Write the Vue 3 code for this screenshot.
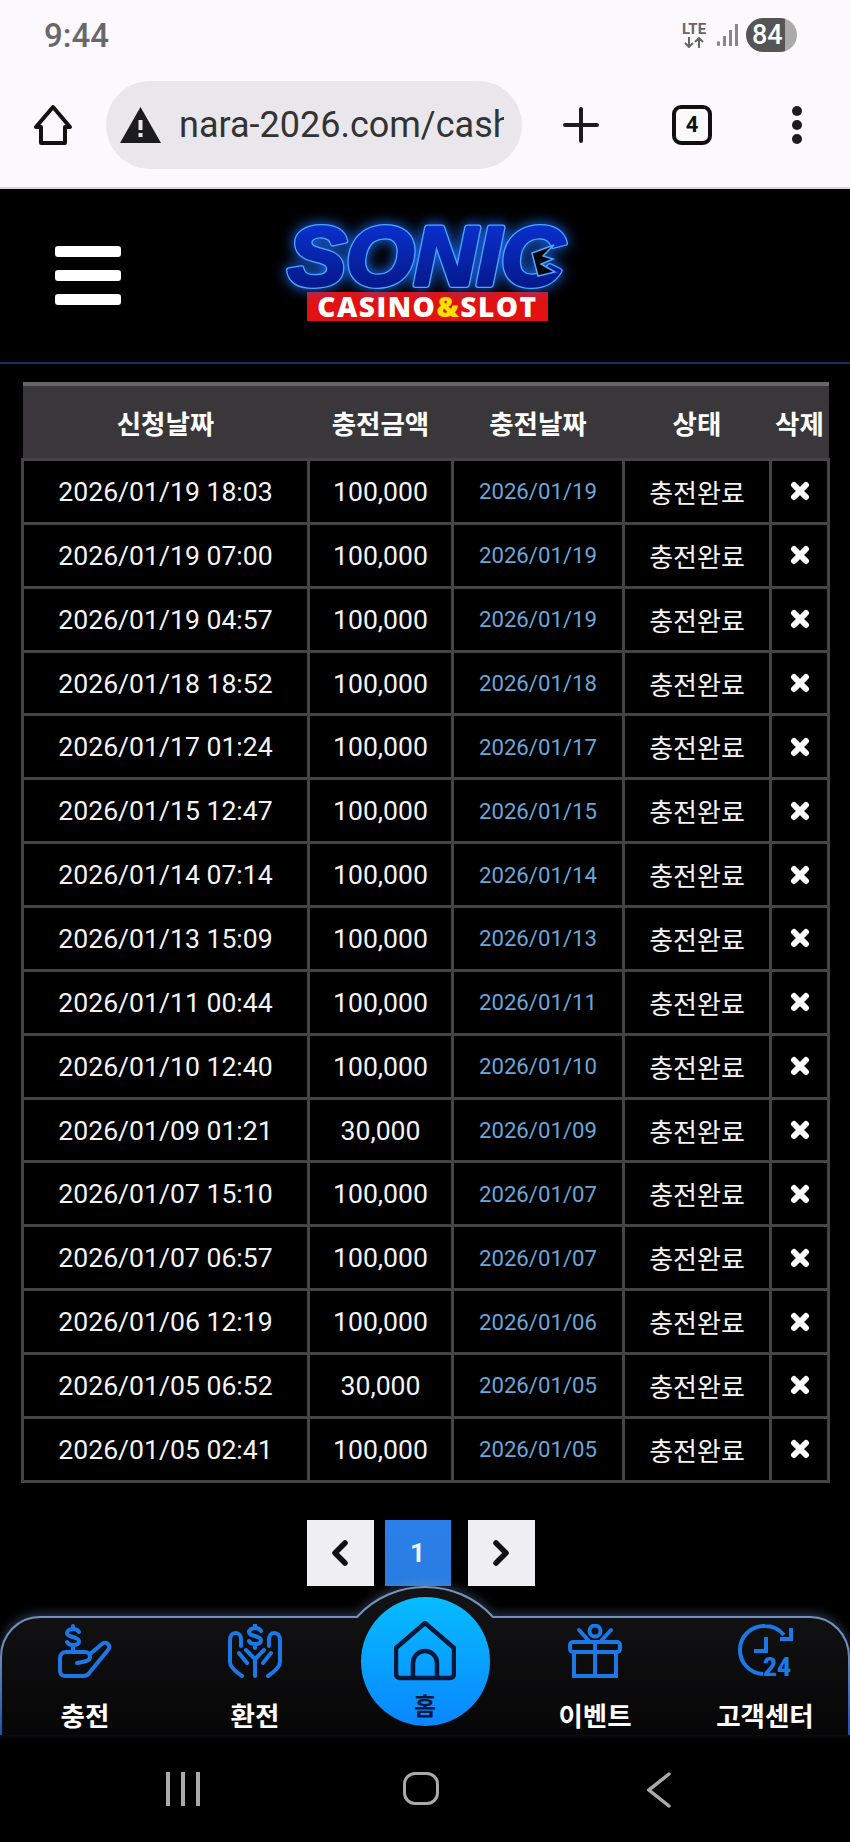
<script setup>
const rows = [
  ['2026/01/19 18:03', '100,000', '2026/01/19'],
  ['2026/01/19 07:00', '100,000', '2026/01/19'],
  ['2026/01/19 04:57', '100,000', '2026/01/19'],
  ['2026/01/18 18:52', '100,000', '2026/01/18'],
  ['2026/01/17 01:24', '100,000', '2026/01/17'],
  ['2026/01/15 12:47', '100,000', '2026/01/15'],
  ['2026/01/14 07:14', '100,000', '2026/01/14'],
  ['2026/01/13 15:09', '100,000', '2026/01/13'],
  ['2026/01/11 00:44', '100,000', '2026/01/11'],
  ['2026/01/10 12:40', '100,000', '2026/01/10'],
  ['2026/01/09 01:21', '30,000', '2026/01/09'],
  ['2026/01/07 15:10', '100,000', '2026/01/07'],
  ['2026/01/07 06:57', '100,000', '2026/01/07'],
  ['2026/01/06 12:19', '100,000', '2026/01/06'],
  ['2026/01/05 06:52', '30,000', '2026/01/05'],
  ['2026/01/05 02:41', '100,000', '2026/01/05'],
]
</script>

<template>
  <div class="page">
    <div class="chrome">
      <div class="status">
        <span class="time">9:44</span>
        <div class="status-icons">
          <div class="lte">
            <span>LTE</span>
            <svg width="26" height="11" viewBox="0 0 26 11" fill="none" stroke="#666" stroke-width="2">
              <path d="M8 0V10M4 6l4 4 4-4M18 11V1M14 5l4-4 4 4" />
            </svg>
          </div>
          <svg class="signal" width="21" height="22" viewBox="0 0 21 22" fill="#888">
            <rect x="0" y="17" width="3" height="5" rx="1.5" />
            <rect x="6" y="12" width="3" height="10" />
            <rect x="12" y="6" width="3" height="16" />
            <rect x="18" y="0" width="3" height="22" />
          </svg>
          <div class="battery">84</div>
        </div>
      </div>
      <div class="toolbar">
        <svg class="tool-home" width="42" height="42" viewBox="0 0 42 42" fill="none" stroke="#111" stroke-width="4" stroke-linejoin="round">
          <path d="M21 3L38 23H33V39H9V23H4Z" />
        </svg>
        <div class="url-pill">
          <svg class="warn" width="41" height="36" viewBox="0 0 41 36">
            <path d="M20.5 0L41 36H0Z" fill="#1c1b1f" />
            <rect x="18.5" y="13" width="4" height="10" fill="#e9e7eb" />
            <rect x="18.5" y="26" width="4" height="4" fill="#e9e7eb" />
          </svg>
          <span class="url">nara-2026.com/cash</span>
        </div>
        <svg class="tool-btn" width="36" height="36" viewBox="0 0 36 36" stroke="#1c1b1f" stroke-width="4" stroke-linecap="round">
          <path d="M18 2V34M2 18H34" />
        </svg>
        <div class="tool-btn tabs">4</div>
        <div class="tool-btn dots"><i></i><i></i><i></i></div>
      </div>
    </div>

    <header class="site-head">
      <div class="burger"><i></i><i></i><i></i></div>
      <div class="logo">
        <svg class="sonic" width="315" height="83" viewBox="0 0 315 83">
          <defs>
            <linearGradient id="sonicFill" x1="0" y1="0" x2="0" y2="1">
              <stop offset="0" stop-color="#0b35dd" />
              <stop offset="1" stop-color="#03137a" />
            </linearGradient>
            <text id="sonicText" class="sonic-text" x="18" y="76" textLength="276" lengthAdjust="spacingAndGlyphs">SONIC</text>
          </defs>
          <use href="#sonicText" fill="#4aa8ff" stroke="#4aa8ff" stroke-width="6" stroke-linejoin="round" />
          <use href="#sonicText" fill="url(#sonicFill)" stroke="url(#sonicFill)" stroke-width="3.5" stroke-linejoin="round" />
          <path d="M262 44L284 36 273 47 283 50 271 55 285 63 268 67Z" fill="#000" stroke="#4aa8ff" stroke-width="1.5" />
        </svg>
        <div class="badge">CASINO<em>&amp;</em>SLOT</div>
      </div>
      <div></div>
    </header>

    <main class="content">
      <table class="cash-table">
        <colgroup>
          <col style="width: 286px" />
          <col style="width: 144px" />
          <col style="width: 171px" />
          <col style="width: 147px" />
          <col style="width: 58px" />
        </colgroup>
        <thead>
          <tr>
            <th>신청날짜</th>
            <th>충전금액</th>
            <th>충전날짜</th>
            <th>상태</th>
            <th>삭제</th>
          </tr>
        </thead>
        <tbody>
          <tr v-for="(row, i) in rows" :key="i">
            <td class="num">{{ row[0] }}</td>
            <td class="num">{{ row[1] }}</td>
            <td class="done-date">{{ row[2] }}</td>
            <td>충전완료</td>
            <td>
              <svg class="del" width="20" height="20" viewBox="0 0 20 20" stroke="#fff" stroke-width="6" stroke-linecap="round">
                <path d="M4 4L16 16M16 4L4 16" />
              </svg>
            </td>
          </tr>
        </tbody>
      </table>

      <div class="pager">
        <button class="page-btn">
          <svg width="20" height="28" viewBox="0 0 20 28" fill="none" stroke="#111" stroke-width="5.5" stroke-linecap="round" stroke-linejoin="round">
            <path d="M15 4L5 14 15 24" />
          </svg>
        </button>
        <button class="page-btn active">1</button>
        <button class="page-btn next">
          <svg width="20" height="28" viewBox="0 0 20 28" fill="none" stroke="#111" stroke-width="5.5" stroke-linecap="round" stroke-linejoin="round">
            <path d="M5 4L15 14 5 24" />
          </svg>
        </button>
      </div>
    </main>

    <nav class="bottom-nav">
      <svg class="nav-shape" width="850" height="150" viewBox="0 0 850 150">
        <defs>
          <linearGradient id="navFill" x1="0" y1="0" x2="0" y2="1">
            <stop offset="0" stop-color="#141416" />
            <stop offset="1" stop-color="#060607" />
          </linearGradient>
          <linearGradient id="navLine" x1="0" y1="0" x2="0" y2="1">
            <stop offset="0" stop-color="#7794bd" />
            <stop offset="0.4" stop-color="#6f8fc0" />
            <stop offset="1" stop-color="#1a55b0" />
          </linearGradient>
        </defs>
        <path
          d="M1 150V72C1 50 18 32 40 32H357C375 12 400 2 425 2S475 12 493 32H810C832 32 849 50 849 72V150"
          fill="url(#navFill)"
          stroke="url(#navLine)"
          stroke-width="2"
        />
      </svg>

      <a class="nav-item">
        <svg width="54" height="54" viewBox="0 0 54 54" fill="none" stroke="#1a78e8" stroke-width="4" stroke-linecap="round" stroke-linejoin="round">
          <path d="M21 8C20 6 18 5 15 5 11 5 9 7 9 9 9 12 12 12 15 13 18 14 21 15 21 17 21 20 18 21 15 21 12 21 10 20 9 18M15 2V5M15 21V27" />
          <path d="M19 39C24 38 32 38 32 33 32 30 30 28 27 28H8A6 6 0 0 0 2 34V47A5 5 0 0 0 7 52H26A8 8 0 0 0 32 48L50 26A4 4 0 0 0 44 20L32 30" />
        </svg>
        <span>충전</span>
      </a>
      <a class="nav-item">
        <svg width="54" height="54" viewBox="0 0 54 54" fill="none" stroke="#1a78e8" stroke-width="4" stroke-linecap="round" stroke-linejoin="round">
          <path d="M33 7C32 5 30 4 27 4 24 4 21 6 21 8 21 11 24 11 27 12 30 13 33 14 33 16 33 19 30 20 27 20 24 20 22 19 21 17M27 1V4M27 20V24" />
          <path d="M27 52V35M27 35L18 26M27 35L36 26" />
          <path d="M8 9C3 9 2 12 2 17V38C2 43 8 48 14 52M8 9C11 9 13 12 13 16V22M11 29L19 39" />
          <path d="M46 9C51 9 52 12 52 17V38C52 43 46 48 40 52M46 9C43 9 41 12 41 16V22M43 29L35 39" />
        </svg>
        <span>환전</span>
      </a>
      <a class="home-item">
        <svg width="62" height="60" viewBox="0 0 62 60" fill="none" stroke="#06183a" stroke-width="4.5" stroke-linejoin="round">
          <path d="M2 27L31 2 60 27V53A4 4 0 0 1 56 57H6A4 4 0 0 1 2 53Z" />
          <path d="M19 57V42A12 12 0 0 1 43 42V57" />
        </svg>
        <span>홈</span>
      </a>
      <a class="nav-item">
        <svg width="54" height="54" viewBox="0 0 54 54" fill="none" stroke="#1a78e8" stroke-width="4" stroke-linecap="round">
          <rect x="2" y="18" width="50" height="10" rx="3" />
          <path d="M6 28V52H48V28M27 18V52" stroke-linecap="butt" />
          <circle cx="27" cy="7" r="5.5" />
          <path d="M11 6L21 17M43 6L33 17" />
        </svg>
        <span>이벤트</span>
      </a>
      <a class="nav-item">
        <svg class="clock" width="54" height="54" viewBox="0 0 54 54" fill="none" stroke="#1a78e8" stroke-width="4">
          <path d="M25 50A24 24 0 0 1 27 2C35 2 41 5 46 11" />
          <path d="M53 4V15H42M28 13V27H16" />
          <text class="clock-num" x="25" y="52" textLength="28" lengthAdjust="spacingAndGlyphs">24</text>
        </svg>
        <span>고객센터</span>
      </a>
    </nav>

    <div class="android-nav">
      <div class="nav-slot">
        <svg width="34" height="34" viewBox="0 0 34 34" fill="#aaa">
          <rect x="0" y="0" width="4" height="34" />
          <rect x="15" y="0" width="4" height="34" />
          <rect x="30" y="0" width="4" height="34" />
        </svg>
      </div>
      <div class="nav-slot"><div class="round-square"></div></div>
      <div class="nav-slot">
        <svg width="24" height="36" viewBox="0 0 24 36" fill="none" stroke="#aaa" stroke-width="3.5" stroke-linecap="round">
          <path d="M22 2L2 18 22 34" />
        </svg>
      </div>
    </div>
  </div>
</template>

<style>
html,
body {
  background: #000;
}
</style>

<style scoped>
.page {
  width: 850px;
  height: 1842px;
  display: flex;
  flex-direction: column;
  overflow: hidden;
  background: #000;
  font-family: Roboto, "Noto Sans CJK KR", sans-serif;
  color: #fff;
}

.chrome {
  height: 189px;
  flex: none;
  background: #fbf9fd;
  border-bottom: 2px solid #d8d6da;
  box-sizing: border-box;
}

.status {
  height: 70px;
  display: flex;
  justify-content: space-between;
  align-items: center;
  padding: 0 53px 0 44px;
}

.time {
  font-size: 33px;
  font-weight: 500;
  color: #68686b;
}

.status-icons {
  display: flex;
  align-items: center;
}

.lte {
  width: 28px;
  display: flex;
  flex-direction: column;
  align-items: center;
  color: #666;
  font-size: 15px;
  font-weight: 700;
  line-height: 15px;
  margin-right: 9px;
}

.signal {
  margin-right: 8px;
}

.battery {
  width: 51px;
  height: 34px;
  border-radius: 17px;
  box-sizing: border-box;
  padding-left: 6px;
  background: linear-gradient(90deg, #555 0, #555 76%, #aaa 76%);
  color: #fff;
  font-size: 27px;
  font-weight: 500;
  line-height: 34px;
}

.toolbar {
  display: grid;
  grid-template-columns: 106px 416px 118px 104px 106px;
  align-items: center;
  height: 110px;
}

.tool-home,
.tool-btn {
  justify-self: center;
}

.url-pill {
  height: 88px;
  border-radius: 44px;
  background: #e9e7eb;
  display: flex;
  align-items: center;
  gap: 18px;
  padding: 0 18px 0 14px;
  overflow: hidden;
}

.warn {
  flex: none;
}

.url {
  flex: 1;
  min-width: 0;
  font-size: 36px;
  color: #333;
  white-space: nowrap;
  overflow: hidden;
}

.tabs {
  width: 40px;
  height: 40px;
  box-sizing: border-box;
  border: 4px solid #111;
  border-radius: 9px;
  color: #111;
  font-size: 22px;
  font-weight: 700;
  line-height: 32px;
  text-align: center;
}

.dots {
  display: flex;
  flex-direction: column;
  gap: 4px;
}

.dots i {
  width: 10px;
  height: 10px;
  border-radius: 50%;
  background: #1c1b1f;
}

.site-head {
  flex: none;
  height: 175px;
  box-sizing: border-box;
  border-bottom: 2px solid #1d2a66;
  display: grid;
  grid-template-columns: 1fr auto 1fr;
  align-items: start;
  padding-top: 20px;
}

.burger {
  display: flex;
  flex-direction: column;
  gap: 13px;
  margin: 37px 0 0 55px;
}

.burger i {
  width: 66px;
  height: 11px;
  border-radius: 3px;
  background: #fff;
}

.logo {
  display: flex;
  flex-direction: column;
  align-items: center;
  margin-left: 5px;
}

.sonic {
  display: block;
  overflow: visible;
  filter: drop-shadow(0 0 7px #1a6bff);
}

.sonic-text {
  font-family: "Liberation Sans", sans-serif;
  font-size: 84px;
  font-weight: 700;
  font-style: italic;
}

.badge {
  width: 241px;
  height: 29px;
  background: #e21212;
  color: #fff;
  font-family: "Open Sans", sans-serif;
  font-size: 28px;
  font-weight: 800;
  line-height: 29px;
  text-align: center;
  white-space: nowrap;
  letter-spacing: 1.5px;
}

.badge em {
  font-style: normal;
  color: #ffe000;
}

.content {
  flex: 1;
  min-height: 0;
  padding: 18px 22px 0 21px;
}

.cash-table {
  width: 806px;
  table-layout: fixed;
  border-collapse: collapse;
  font-size: 26px;
}

.cash-table th {
  height: 72px;
  padding: 0;
  background: #39373a;
  border-top: 4px solid #666;
  font-size: 26.5px;
  font-weight: 700;
  white-space: nowrap;
}

.cash-table td {
  height: 60.87px;
  padding: 0;
  border: 3px solid #454345;
  background: #000;
  text-align: center;
  color: #f4f4f4;
}

.cash-table td.num {
  font-size: 26.6px;
}

.cash-table td.done-date {
  font-size: 22.2px;
  color: #6ba6d8;
}

.del {
  display: block;
  margin: 0 auto;
}

.pager {
  display: flex;
  justify-content: center;
  gap: 11px;
  margin-top: 37px;
  padding-right: 8px;
}

.page-btn {
  width: 67px;
  height: 66px;
  padding: 0;
  border: none;
  background: #efeef0;
  display: flex;
  align-items: center;
  justify-content: center;
  font-family: Roboto, sans-serif;
}

.page-btn.active {
  width: 66px;
  background: linear-gradient(180deg, #2a80ea, #2a7de0);
  color: #f0f4fa;
  font-size: 26px;
  font-weight: 700;
}

.page-btn.next {
  margin-left: 6px;
}

.bottom-nav {
  position: relative;
  flex: none;
  height: 150px;
  display: grid;
  grid-template-columns: repeat(5, 170px);
}

.nav-shape {
  position: absolute;
  left: 0;
  top: 0;
  overflow: visible;
  filter: drop-shadow(0 -3px 5px rgba(120, 160, 220, 0.3));
}

.nav-item {
  position: relative;
  display: flex;
  flex-direction: column;
  align-items: center;
  padding-top: 39px;
}

.nav-item span {
  margin-top: 19px;
  font-family: "Noto Sans CJK KR", sans-serif;
  font-size: 26.5px;
  font-weight: 700;
  line-height: 36px;
  color: #fff;
  white-space: nowrap;
}

.home-item {
  position: relative;
  width: 129px;
  height: 129px;
  margin: 12px 0 0 20.5px;
  box-sizing: border-box;
  padding-top: 24px;
  border-radius: 50%;
  background: linear-gradient(180deg, #07bcff, #0a86ff);
  display: flex;
  flex-direction: column;
  align-items: center;
  color: #06183a;
}

.home-item span {
  font-family: "Noto Sans CJK KR", sans-serif;
  font-size: 24px;
  font-weight: 700;
  line-height: 30px;
  margin-top: 9px;
}

.clock {
  overflow: visible;
}

.clock-num {
  font-family: Roboto, sans-serif;
  font-size: 26px;
  font-weight: 900;
  fill: #1a78e8;
  stroke: none;
}

.android-nav {
  flex: none;
  height: 107px;
  box-sizing: border-box;
  display: grid;
  grid-template-columns: repeat(3, 238px);
  padding: 37px 0 0 64px;
  background: #000;
}

.nav-slot {
  display: flex;
  justify-content: center;
  align-items: flex-start;
}

.round-square {
  width: 36px;
  height: 33px;
  box-sizing: border-box;
  border: 3.5px solid #aaa;
  border-radius: 12px;
}
</style>
